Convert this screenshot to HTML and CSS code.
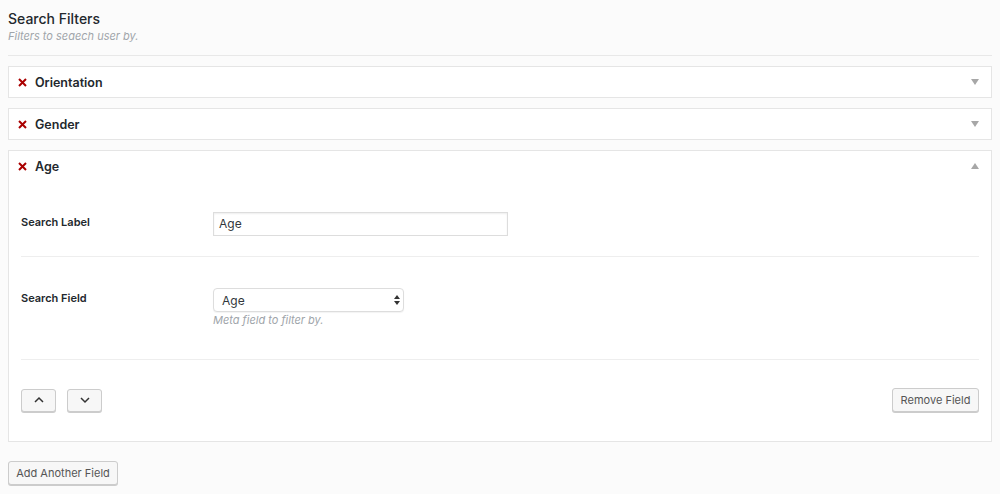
FILE: index.html
```html
<!DOCTYPE html>
<html>
<head>
<meta charset="utf-8">
<link rel="stylesheet" href="styles.css">
</head>
<body>
<div class="page">
  <h2 class="title">Search Filters</h2>
  <p class="subtitle">Filters to seaech user by.</p>
  <div class="rule"></div>

  <div class="box">
    <div class="box-head">
      <svg class="x" width="9" height="9" viewBox="0 0 9 9"><path d="M1 1L8 8M8 1L1 8" stroke="#a00" stroke-width="2"/></svg>
      <span class="name">Orientation</span>
      <svg class="caret" width="8" height="6" viewBox="0 0 8 6"><path d="M0 0H8L4 6Z" fill="#a7a7a7"/></svg>
    </div>
  </div>

  <div class="box">
    <div class="box-head">
      <svg class="x" width="9" height="9" viewBox="0 0 9 9"><path d="M1 1L8 8M8 1L1 8" stroke="#a00" stroke-width="2"/></svg>
      <span class="name">Gender</span>
      <svg class="caret" width="8" height="6" viewBox="0 0 8 6"><path d="M0 0H8L4 6Z" fill="#a7a7a7"/></svg>
    </div>
  </div>

  <div class="box">
    <div class="box-head">
      <svg class="x" width="9" height="9" viewBox="0 0 9 9"><path d="M1 1L8 8M8 1L1 8" stroke="#a00" stroke-width="2"/></svg>
      <span class="name">Age</span>
      <svg class="caret" width="8" height="6" viewBox="0 0 8 6"><path d="M0 6H8L4 0Z" fill="#a7a7a7"/></svg>
    </div>
    <div class="box-body">
      <div class="row row-first">
        <div class="label">Search Label</div>
        <div class="field">
          <div class="input">Age</div>
        </div>
      </div>
      <div class="row row-second">
        <div class="label">Search Field</div>
        <div class="field">
          <div class="select">
            <span>Age</span>
            <svg width="6" height="10" viewBox="0 0 6 10"><path d="M0 4H6L3 0Z M0 6H6L3 10Z" fill="#333"/></svg>
          </div>
          <div class="desc">Meta field to filter by.</div>
        </div>
      </div>
      <div class="actions">
        <div class="moves">
          <div class="btn btn-icon"><svg width="12" height="8" viewBox="0 0 12 8"><path d="M2 6L6 2L10 6" fill="none" stroke="#333" stroke-width="1.5"/></svg></div>
          <div class="btn btn-icon"><svg width="12" height="8" viewBox="0 0 12 8"><path d="M2 2L6 6L10 2" fill="none" stroke="#333" stroke-width="1.5"/></svg></div>
        </div>
        <div class="btn remove">Remove Field</div>
      </div>
    </div>
  </div>

  <div class="add-wrap">
    <div class="btn add">Add Another Field</div>
  </div>
</div>
</body>
</html>
```

FILE: styles.css
```css
* { box-sizing: border-box; }
html, body { margin: 0; padding: 0; background: #fbfbfb; }
body {
  font-family: Inter, "Helvetica Neue", Arial, sans-serif;
  color: #23282d;
  width: 1000px;
  height: 494px;
  overflow: hidden;
}
.page { padding: 9px 8px 0; }
.title {
  margin: 0;
  font-size: 14px;
  font-weight: 500;
  line-height: 20px;
  color: #23282d;
}
.subtitle {
  margin: 0;
  font-size: 11px;
  font-style: italic;
  line-height: 14px;
  color: #a0a5aa;
}
.rule {
  height: 1px;
  background: #e8e8e8;
  margin: 12px 0 10px;
}
.box {
  background: #fff;
  border: 1px solid #e5e5e5;
  margin-bottom: 10px;
}
.box-head {
  height: 30px;
  display: flex;
  align-items: center;
  padding: 0 12px 0 9px;
}
.x {
  display: block;
  margin-right: 8px;
}
.name {
  font-size: 12.5px;
  font-weight: 600;
  color: #23282d;
  flex: 1;
}
.caret { display: block; }
.box-body { padding: 0 12px 29px; }
.row {
  display: flex;
  border-bottom: 1px solid #eee;
}
.row-first { padding: 31px 0 20px; }
.row-second { padding: 31px 0 32px; }
.label {
  width: 192px;
  font-size: 11px;
  font-weight: 600;
  color: #23282d;
  line-height: 20px;
}
.input {
  width: 295px;
  height: 24px;
  border: 1px solid #ddd;
  box-shadow: inset 0 1px 2px rgba(0,0,0,0.07);
  font-size: 12px;
  line-height: 22px;
  padding: 0 5px;
  color: #32373c;
  background: #fff;
}
.select {
  width: 191px;
  height: 24px;
  border: 1px solid #ddd;
  border-radius: 4px;
  box-shadow: 0 1px 1px rgba(0,0,0,0.05);
  display: flex;
  align-items: center;
  justify-content: space-between;
  padding: 0 3px 0 8px;
  font-size: 12px;
  color: #32373c;
  background: #fff;
}
.select svg { display: block; }
.desc {
  font-size: 11px;
  font-style: italic;
  color: #a0a5aa;
  line-height: 14px;
  margin-top: 1px;
}
.actions {
  display: flex;
  justify-content: space-between;
  align-items: center;
  padding-top: 28px;
}
.moves { display: flex; gap: 11px; }
.btn {
  display: flex;
  align-items: center;
  justify-content: center;
  height: 24px;
  padding: 0 9px;
  background: #f7f7f7;
  border: 1px solid #ccc;
  border-radius: 3px;
  box-shadow: 0 1px 0 #ccc;
  font-size: 11px;
  color: #555;
}
.btn-icon { width: 35px; height: 23px; padding: 0; }
.btn-icon svg { display: block; }
.remove { width: 87px; padding: 0; }
.add-wrap { display: flex; padding-top: 9px; }
.add { width: 110px; padding: 0; }
```
